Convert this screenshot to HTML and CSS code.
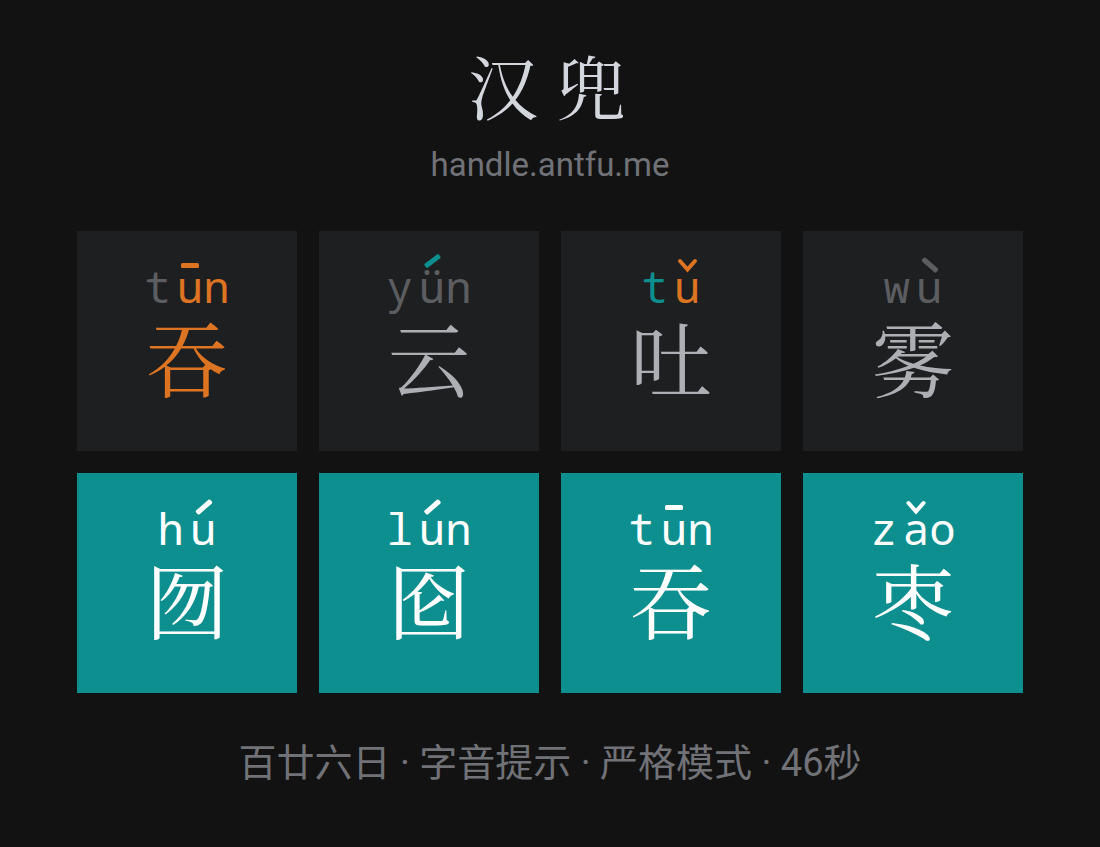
FILE: index.html
```html
<!DOCTYPE html>
<html lang="zh-CN">
<head>
<meta charset="utf-8">
<title>汉兜</title>
<link rel="stylesheet" href="styles.css">
</head>
<body>
<main class="page">
  <header class="header">
    <h1 class="title">汉兜</h1>
    <p class="site">handle.antfu.me</p>
  </header>
  <section class="board">
    <div class="tile">
      <div class="pinyin"><span class="initial">t</span><span class="final misplaced">un<svg class="tone" viewBox="0 0 26 24"><rect x="4" y="13" width="18" height="5" rx="1.5"/></svg></span></div>
      <div class="char misplaced">吞</div>
    </div>
    <div class="tile">
      <div class="pinyin"><span class="initial">y</span><span class="final">ün<svg class="tone exact" viewBox="0 0 26 24"><rect x="4.5" y="8.5" width="18" height="5" rx="1.5" transform="rotate(-37 13.5 11)"/></svg></span></div>
      <div class="char">云</div>
    </div>
    <div class="tile">
      <div class="pinyin"><span class="initial exact">t</span><span class="final misplaced">u<svg class="tone" viewBox="0 0 26 24"><path d="M6 11L13.5 19.5L21 11"/></svg></span></div>
      <div class="char">吐</div>
    </div>
    <div class="tile">
      <div class="pinyin"><span class="initial">w</span><span class="final">u<svg class="tone" viewBox="0 0 26 24"><rect x="4.5" y="12.5" width="19" height="5" rx="1.5" transform="rotate(41 14 15)"/></svg></span></div>
      <div class="char">雾</div>
    </div>
    <div class="tile solved">
      <div class="pinyin"><span class="initial">h</span><span class="final">u<svg class="tone" viewBox="0 0 26 24"><rect x="4.5" y="12.5" width="19" height="5" rx="1.5" transform="rotate(-41 14 15)"/></svg></span></div>
      <div class="char">囫</div>
    </div>
    <div class="tile solved">
      <div class="pinyin"><span class="initial">l</span><span class="final">un<svg class="tone" viewBox="0 0 26 24"><rect x="4" y="12.5" width="19" height="5" rx="1.5" transform="rotate(-41 13.5 15)"/></svg></span></div>
      <div class="char">囵</div>
    </div>
    <div class="tile solved">
      <div class="pinyin"><span class="initial">t</span><span class="final">un<svg class="tone" viewBox="0 0 26 24"><rect x="4" y="13" width="18" height="5" rx="1.5"/></svg></span></div>
      <div class="char">吞</div>
    </div>
    <div class="tile solved">
      <div class="pinyin"><span class="initial">z</span><span class="final">ao<svg class="tone" viewBox="0 0 26 24"><path d="M5.5 11L13 19.5L20.5 11"/></svg></span></div>
      <div class="char">枣</div>
    </div>
  </section>
  <footer class="footer">百廿六日 · 字音提示 · 严格模式 · 46秒</footer>
</main>
</body>
</html>
```

FILE: styles.css
```css
* { box-sizing: border-box; }
body {
  margin: 0;
  background: #121212;
  color: #d4d6de;
  font-family: Roboto, "Noto Sans CJK SC", sans-serif;
}
.page {
  display: flex;
  flex-direction: column;
  align-items: center;
  padding: 40px 24px;
}
.header { text-align: center; }
.title {
  margin: 0;
  padding-left: 12px;
  font: 400 70px/90px "Noto Serif CJK SC", "Noto Serif SC", "Source Han Serif SC", serif;
  letter-spacing: 18px;
}
.site {
  margin: 15px 0 0;
  color: #717277;
  font-size: 33px;
  line-height: 40px;
}
.board {
  display: grid;
  grid-template-columns: repeat(4, 1fr);
  gap: 22px;
  width: 100%;
  max-width: 946px;
  margin-top: 46px;
}
.tile {
  display: flex;
  flex-direction: column;
  align-items: center;
  aspect-ratio: 1;
  padding-top: 25px;
  background: #1e1f21;
  color: #adafb5;
}
.pinyin {
  display: flex;
  gap: 6px;
  color: #5c5d60;
  font: 44px/60px "Noto Sans Mono", "Noto Sans Mono CJK SC", "DejaVu Sans Mono", monospace;
}
.final { position: relative; }
.tone {
  position: absolute;
  left: 0;
  top: -6px;
  width: 26px;
  height: 24px;
  fill: currentColor;
}
.tone path {
  fill: none;
  stroke: currentColor;
  stroke-width: 4;
  stroke-linecap: round;
}
.char { font: 82px/79px "Noto Serif CJK SC", "Noto Serif SC", "Source Han Serif SC", serif; }
.exact { color: #0d8f8f; }
.misplaced { color: #dd7422; }
.solved { background: #0d8f8f; color: #fff; }
.solved .pinyin { color: #fff; }
.footer {
  margin-top: 46px;
  color: #717277;
  font-size: 38px;
  line-height: 48px;
}
```
